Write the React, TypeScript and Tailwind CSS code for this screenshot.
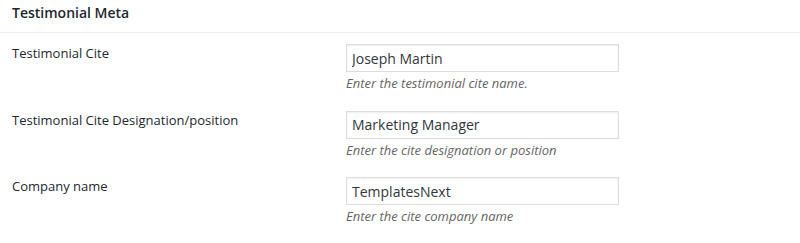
import React from 'react';

interface MetaField {
  label: string;
  value: string;
  help: string;
}

const fields: MetaField[] = [
  { label: 'Testimonial Cite', value: 'Joseph Martin', help: 'Enter the testimonial cite name.' },
  { label: 'Testimonial Cite Designation/position', value: 'Marketing Manager', help: 'Enter the cite designation or position' },
  { label: 'Company name', value: 'TemplatesNext', help: 'Enter the cite company name' },
];

const App: React.FC = () => {
  return (
    <div className="w-[800px] h-[243px] bg-white font-['Open_Sans',sans-serif] text-[#23282d]">
      <div className="h-[33px] border-b border-[#eeeeee] px-3 pt-[3px]">
        <h2 className="text-[14px] leading-[19px] font-semibold">Testimonial Meta</h2>
      </div>
      <div className="px-3 pt-[11px]">
        {fields.map((field, index) => (
          <div key={index} className="grid grid-cols-[334px_273px] mb-[18px]">
            <label className="text-[13px] leading-[18px]">{field.label}</label>
            <div>
              <input
                type="text"
                defaultValue={field.value}
                className="block w-[273px] h-[28px] border border-[#dddddd] shadow-[inset_0_1px_2px_rgba(0,0,0,0.07)] px-[5px] text-[14px] text-[#32373c] outline-none"
              />
              <p className="mt-[2px] text-[13px] leading-[18.5px] italic text-[#666666]">{field.help}</p>
            </div>
          </div>
        ))}
      </div>
    </div>
  );
};

export default App;
